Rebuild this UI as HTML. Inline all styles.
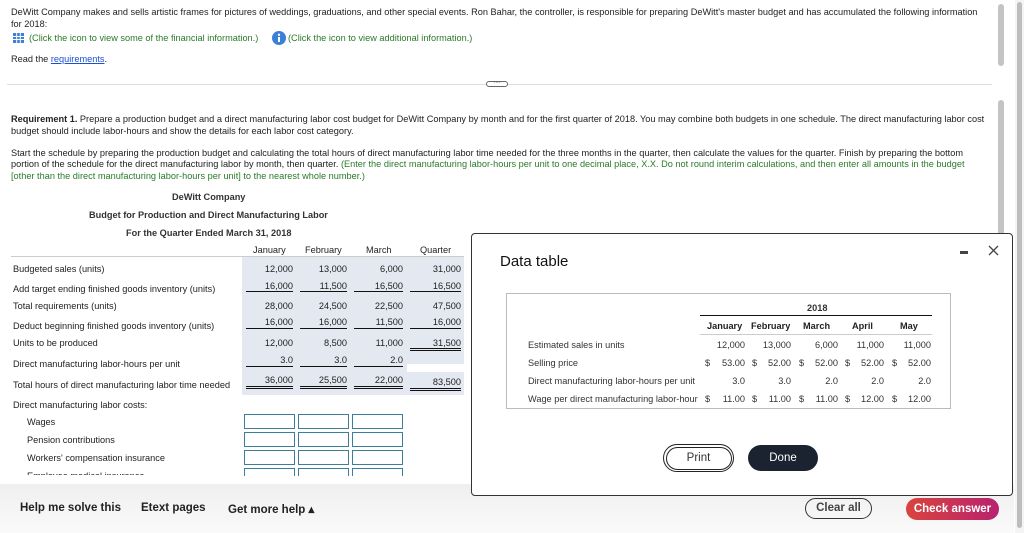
<!DOCTYPE html>
<html><head><style>
*{margin:0;padding:0;box-sizing:border-box}
body{width:1024px;height:533px;overflow:hidden;background:#fff;font-family:"Liberation Sans",Arial,sans-serif;font-size:9.2px;color:#222;position:relative}
.a{position:absolute;white-space:nowrap}
.g{color:#2a7a2a}
.r{text-align:right}
.sh{position:absolute;background:#e4e8f0}
.ul{position:absolute;height:1px;background:#111}
.inp{position:absolute;width:51px;height:15px;border:1.5px solid #3a7e9a;background:#fff}
</style></head><body>
<div class="a" style="left:11px;top:7px">DeWitt Company makes and sells artistic frames for pictures of weddings, graduations, and other special events. Ron Bahar, the controller, is responsible for preparing DeWitt's master budget and has accumulated the following information</div>
<div class="a" style="left:11px;top:19px">for 2018:</div>
<svg class="a" style="left:13px;top:33px" width="11" height="10"><rect x="0" y="0" width="11" height="10" fill="#3b7fd6"/><g stroke="#fff" stroke-width="1"><line x1="0" y1="3.5" x2="11" y2="3.5"/><line x1="0" y1="6.5" x2="11" y2="6.5"/><line x1="3.7" y1="0" x2="3.7" y2="10"/><line x1="7.3" y1="0" x2="7.3" y2="10"/></g></svg>
<div class="a g" style="left:29px;top:33px">(Click the icon to view some of the financial information.)</div>
<svg class="a" style="left:272px;top:31px" width="14" height="14"><circle cx="7" cy="7" r="7" fill="#3b7fd6"/><circle cx="7" cy="3.8" r="1.2" fill="#fff"/><rect x="6" y="6" width="2" height="5" fill="#fff"/></svg>
<div class="a g" style="left:288px;top:33px">(Click the icon to view additional information.)</div>
<div class="a" style="left:11px;top:54px">Read the <span style="color:#1a4fd6;text-decoration:underline">requirements</span>.</div>
<div class="a" style="left:7px;top:84px;width:985px;height:1px;background:#e2dce2"></div>
<div class="a" style="left:486px;top:81px;width:22px;height:6px;border:1px solid #666;border-radius:3px;background:#fff;font-size:5px;line-height:3px;text-align:center">····</div>
<div class="a" style="left:11px;top:114px"><b>Requirement 1.</b> Prepare a production budget and a direct manufacturing labor cost budget for DeWitt Company by month and for the first quarter of 2018. You may combine both budgets in one schedule. The direct manufacturing labor cost</div>
<div class="a" style="left:11px;top:126px">budget should include labor-hours and show the details for each labor cost category.</div>
<div class="a" style="left:11px;top:148px">Start the schedule by preparing the production budget and calculating the total hours of direct manufacturing labor time needed for the three months in the quarter, then calculate the values for the quarter. Finish by preparing the bottom</div>
<div class="a" style="left:11px;top:159px">portion of the schedule for the direct manufacturing labor by month, then quarter. <span class="g">(Enter the direct manufacturing labor-hours per unit to one decimal place, X.X. Do not round interim calculations, and then enter all amounts in the budget</span></div>
<div class="a g" style="left:11px;top:171px">[other than the direct manufacturing labor-hours per unit] to the nearest whole number.)</div>
<div class="a" style="left:172px;top:192px;font-weight:bold;color:#333">DeWitt Company</div>
<div class="a" style="left:89px;top:210px;font-weight:bold;color:#333">Budget for Production and Direct Manufacturing Labor</div>
<div class="a" style="left:126px;top:228px;font-weight:bold;color:#333">For the Quarter Ended March 31, 2018</div>

<div class="sh" style="left:242px;top:257px;width:222px;height:107px"></div>
<div class="sh" style="left:242px;top:357px;width:165px;height:38px"></div>
<div class="sh" style="left:407px;top:372px;width:57px;height:23px"></div>
<div class="a" style="left:11px;top:256px;width:453px;height:1px;background:#ccc"></div>
<div class="a" style="left:253px;top:245px">January</div><div class="a" style="left:305px;top:245px">February</div><div class="a" style="left:366px;top:245px">March</div><div class="a" style="left:420px;top:245px">Quarter</div>

<div class="a" style="left:13px;top:264px">Budgeted sales (units)</div>
<div class="a" style="left:13px;top:284px">Add target ending finished goods inventory (units)</div>
<div class="a" style="left:13px;top:301px">Total requirements (units)</div>
<div class="a" style="left:13px;top:321px">Deduct beginning finished goods inventory (units)</div>
<div class="a" style="left:13px;top:338px">Units to be produced</div>
<div class="a" style="left:13px;top:359px">Direct manufacturing labor-hours per unit</div>
<div class="a" style="left:13px;top:380px">Total hours of direct manufacturing labor time needed</div>
<div class="a" style="left:13px;top:400px">Direct manufacturing labor costs:</div>
<div class="a" style="left:27px;top:417px">Wages</div>
<div class="a" style="left:27px;top:435px">Pension contributions</div>
<div class="a" style="left:27px;top:453px">Workers' compensation insurance</div>
<div class="a" style="left:27px;top:471px;height:4px;overflow:hidden">Employee medical insurance</div>

<div id="nums"></div>
<script>
var cols=[293,347,403,461],rows=[
[264,["12,000","13,000","6,000","31,000"]],
[281,["16,000","11,500","16,500","16,500"]],
[301,["28,000","24,500","22,500","47,500"]],
[317,["16,000","16,000","11,500","16,000"]],
[338,["12,000","8,500","11,000","31,500"]],
[355,["3.0","3.0","2.0",""]],
[375,["36,000","25,500","22,000","83,500"]]],h="";
rows.forEach(function(r){r[1].forEach(function(v,i){var t=r[0];if(r[0]==375&&i==3)t=377;h+='<div class="a r" style="left:'+(cols[i]-50)+'px;width:50px;top:'+t+'px">'+v+'</div>';});});
var L=[246,300,354,410],W=[47,47,49,51];
function ul(y,i){h+='<div class="ul" style="left:'+L[i]+'px;width:'+W[i]+'px;top:'+y+'px"></div>';}
for(var i=0;i<4;i++){ul(291,i);ul(328,i);}
ul(348,3);ul(350,3);
for(i=0;i<3;i++)ul(366,i);
for(i=0;i<3;i++){ul(386,i);ul(388,i);}
ul(388,3);ul(390,3);
var IX=[244,298,352];[414,432,450,468].forEach(function(y){IX.forEach(function(x){h+='<div class="inp" style="left:'+x+'px;top:'+y+'px'+(y==468?';height:8px;border-bottom:none':'')+'"></div>';});});
document.getElementById('nums').innerHTML=h;
</script>

<div class="a" style="left:0;top:484px;width:1014px;height:49px;background:linear-gradient(#efefef,#fafafa)"></div>
<div class="a" style="left:20px;top:502px;font-size:11.5px;font-weight:bold">Help me solve this</div>
<div class="a" style="left:141px;top:502px;font-size:11.5px;font-weight:bold">Etext pages</div>
<div class="a" style="left:228px;top:502px;font-size:11.5px;font-weight:bold">Get more help ▴</div>
<div class="a" style="left:805px;top:498px;width:67px;height:21px;border:1.5px solid #333;border-radius:11px;font-size:11.5px;font-weight:bold;color:#444;text-align:center;line-height:19px">Clear all</div>
<div class="a" style="left:906px;top:498px;width:93px;height:22px;border-radius:11px;background:linear-gradient(90deg,#d9443e,#b8226e);font-size:11.5px;font-weight:bold;color:#fff;text-align:center;line-height:22px">Check answer</div>

<div class="a" style="left:1015px;top:0;width:9px;height:533px;background:#f4f4f4"></div>
<div class="a" style="left:1017px;top:2px;width:5px;height:526px;background:#bdbdbd;border-radius:3px"></div>
<div class="a" style="left:998px;top:4px;width:6px;height:62px;background:#c4c4c4;border-radius:3px"></div>
<div class="a" style="left:998px;top:100px;width:6px;height:390px;background:#c4c4c4;border-radius:3px"></div>

<div class="a" style="left:471px;top:233px;width:542px;height:263px;border:1.5px solid #333;border-radius:4px;background:#fff"></div>
<div class="a" style="left:500px;top:253px;font-size:15px;color:#111">Data table</div>
<div class="a" style="left:960px;top:251px;width:8px;height:3px;background:#444"></div>
<svg class="a" style="left:988px;top:245px" width="11" height="11"><path d="M1 1L10 10M10 1L1 10" stroke="#444" stroke-width="1.3"/></svg>
<div class="a" style="left:506px;top:293px;width:445px;height:116px;border:1px solid #bbb"></div>
<div class="a" style="left:700px;top:315px;width:232px;height:1px;background:#111"></div>
<div class="a" style="left:807px;top:303px;font-weight:bold;color:#333">2018</div>
<div class="a" style="left:700px;top:334px;width:232px;height:1px;background:#ccc"></div>
<div class="a" style="left:707px;top:321px;font-weight:bold">January</div>
<div class="a" style="left:751px;top:321px;font-weight:bold">February</div>
<div class="a" style="left:803px;top:321px;font-weight:bold">March</div>
<div class="a" style="left:852px;top:321px;font-weight:bold">April</div>
<div class="a" style="left:900px;top:321px;font-weight:bold">May</div>
<div id="dt"></div>
<script>
var d=[[344,"Estimated sales in units",["","12,000","","13,000","","6,000","","11,000","","11,000"]],
[362,"Selling price",["$","53.00","$","52.00","$","52.00","$","52.00","$","52.00"]],
[380,"Direct manufacturing labor-hours per unit",["","3.0","","3.0","","2.0","","2.0","","2.0"]],
[398,"Wage per direct manufacturing labor-hour",["$","11.00","$","11.00","$","11.00","$","12.00","$","12.00"]]];
var vr=[745,791,838,884,931],sx=[705,752,799,845,892],o="";
d.forEach(function(r){o+='<div class="a" style="left:528px;top:'+(r[0]-4)+'px;color:#333">'+r[1]+'</div>';
for(var i=0;i<5;i++){if(r[2][2*i])o+='<div class="a" style="left:'+sx[i]+'px;top:'+(r[0]-4)+'px;color:#333">$</div>';
o+='<div class="a r" style="left:'+(vr[i]-40)+'px;width:40px;top:'+(r[0]-4)+'px;color:#333">'+r[2][2*i+1]+'</div>';}});
document.getElementById('dt').innerHTML=o;
</script>
<div class="a" style="left:663px;top:444px;width:71px;height:28px;border:1.5px solid #222;border-radius:14px;padding:1.5px"><div style="width:100%;height:100%;border:1.5px solid #222;border-radius:12px;text-align:center;line-height:20px;font-size:11.5px;color:#333">Print</div></div>
<div class="a" style="left:748px;top:445px;width:70px;height:26px;border-radius:13px;background:#1b2330;color:#fff;text-align:center;line-height:26px;font-size:11.5px">Done</div>
</body></html>
